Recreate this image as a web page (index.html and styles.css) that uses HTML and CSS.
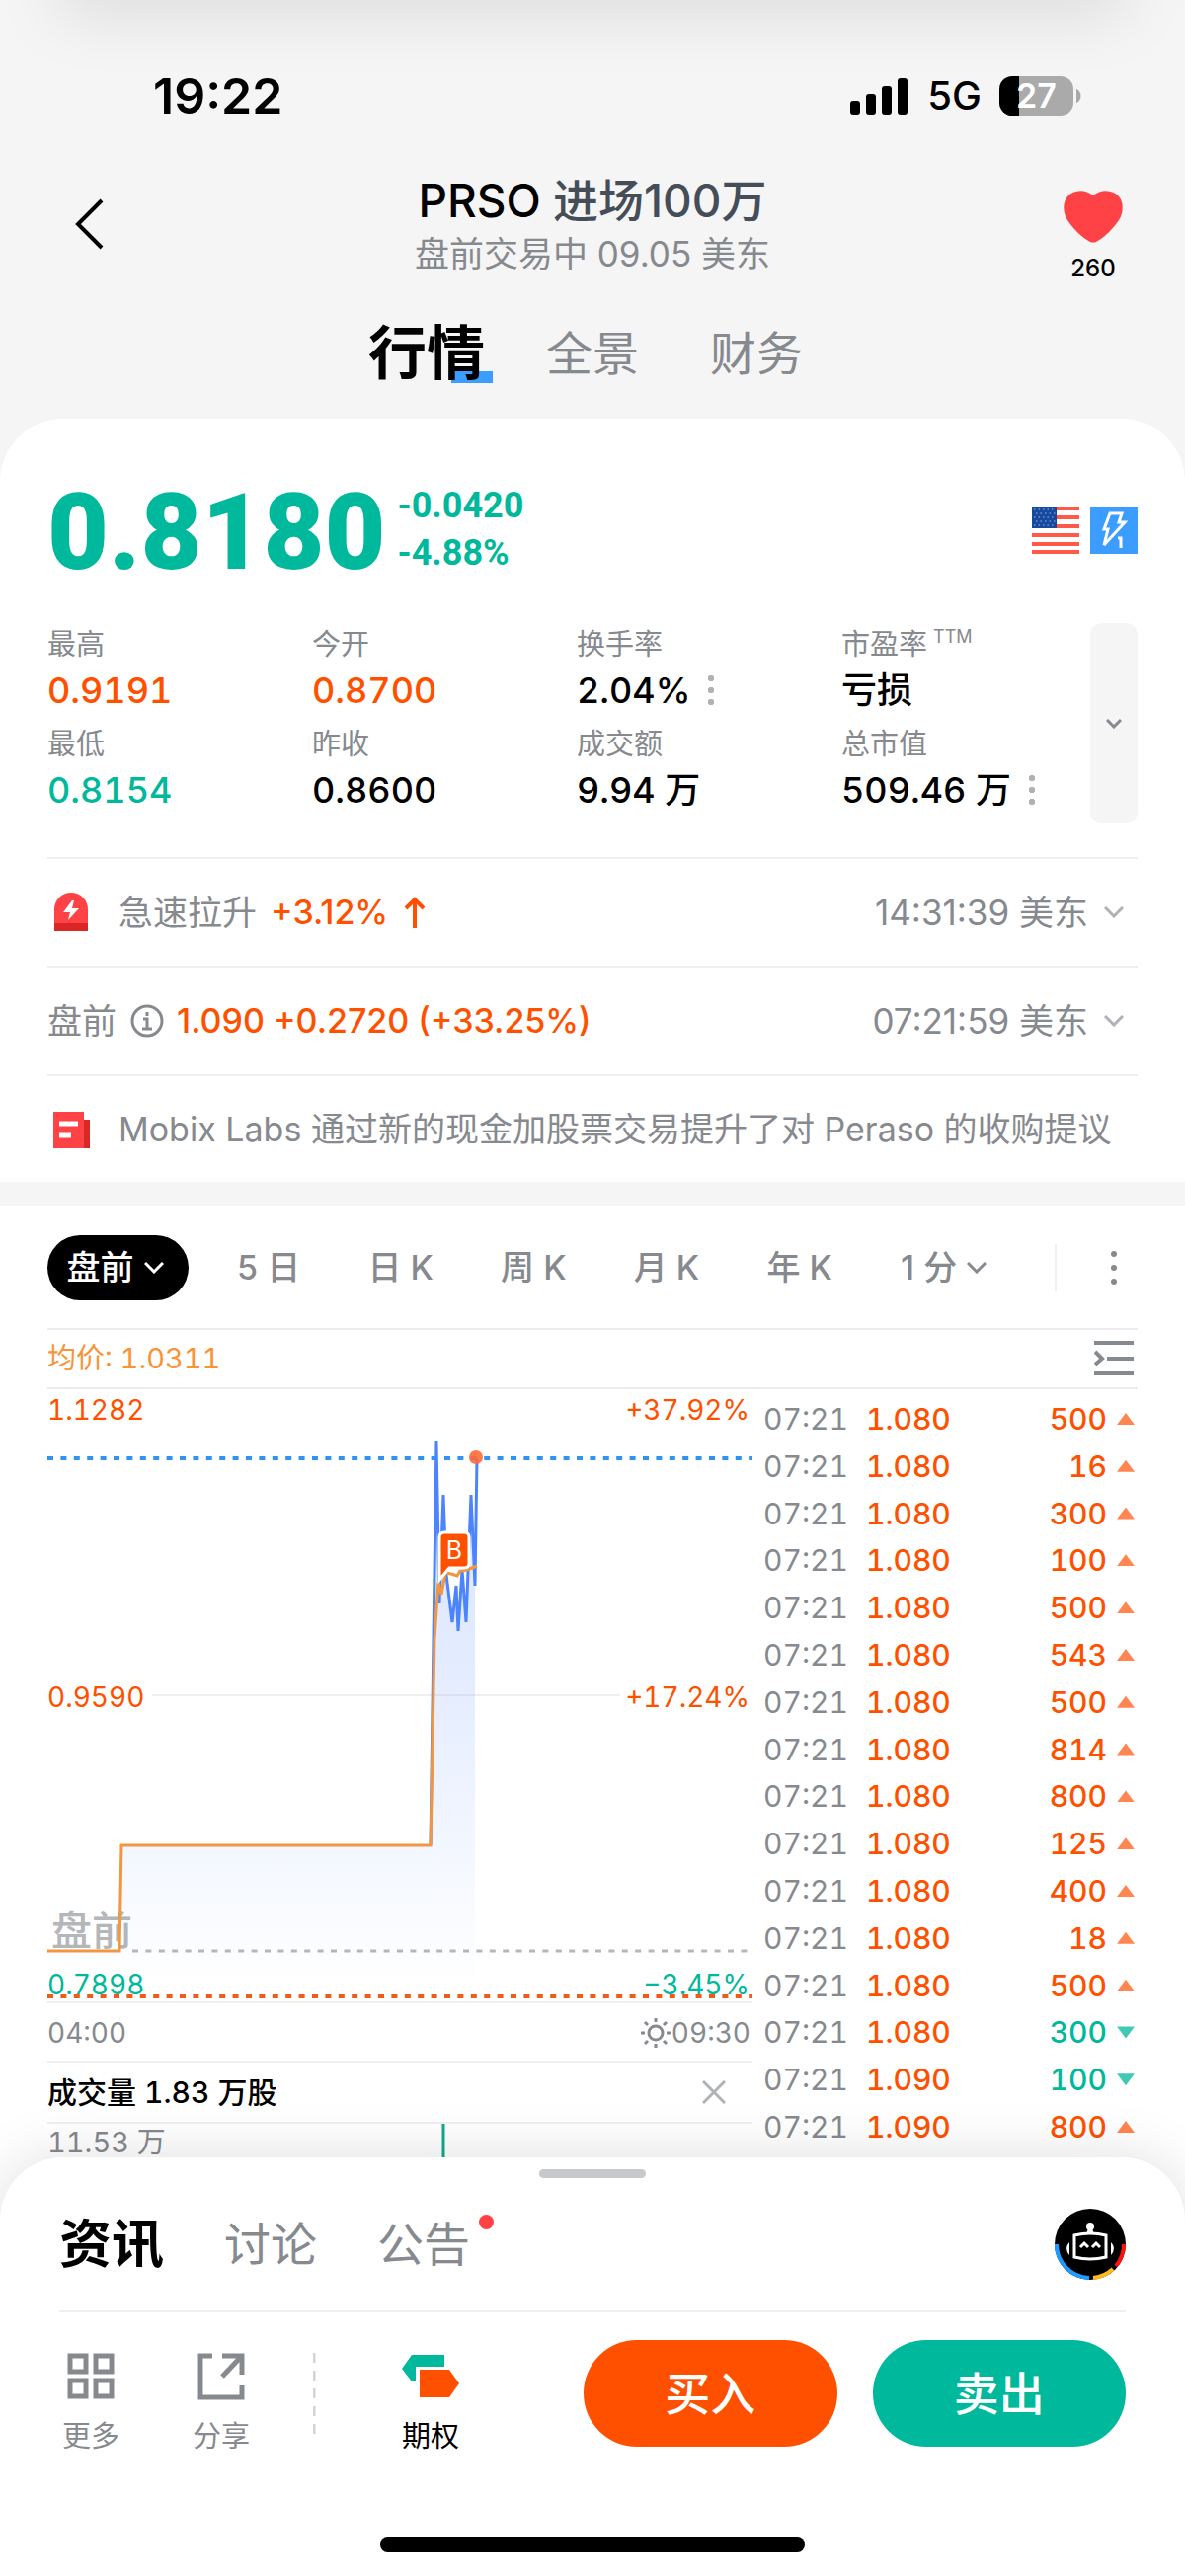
FILE: index.html
```html
<!DOCTYPE html>
<html lang="zh-CN">
<head>
<meta charset="utf-8">
<meta name="viewport" content="width=device-width, initial-scale=1">
<title>PRSO 行情</title>
<link rel="stylesheet" href="styles.css">
</head>
<body>
<div class="top-shade"></div>
<div class="status">
  <span class="clock">19:22</span>
  <div class="status-right">
    <svg class="signal" width="58" height="37" viewBox="0 0 58 37"><rect x="0" y="23" width="10" height="14" rx="3"/><rect x="16" y="16" width="10" height="21" rx="3"/><rect x="32" y="8" width="10" height="29" rx="3"/><rect x="48" y="0" width="10" height="37" rx="3"/></svg>
    <span class="network">5G</span>
    <span class="battery"><span class="battery-body">27</span><svg width="5" height="14" viewBox="0 0 5 14"><path d="M0 0C6 2 6 12 0 14Z" fill="#aaa"/></svg></span>
  </div>
</div>

<header class="header">
  <button class="back" aria-label="返回"><svg width="30" height="52" viewBox="0 0 30 52"><path d="M27 2 3 26l24 24" fill="none" stroke="#000" stroke-width="4"/></svg></button>
  <div class="heading">
    <h1>PRSO <span>进场100万</span></h1>
    <p>盘前交易中 09.05 美东</p>
  </div>
  <button class="like"><svg width="60" height="53" viewBox="0 0 60 53"><path d="M30 5C22-2 10-1 4 6-1 12-1 22 4 30c6 9 14 17 23 22q3 1 6 0c9-5 17-13 23-22 5-8 5-18 0-24C50-1 38-2 30 5Z" fill="#ff4245"/></svg><span>260</span></button>
</header>

<nav class="tabs">
  <a href="#" class="tab active">行情</a>
  <a href="#" class="tab second">全景</a>
  <a href="#" class="tab">财务</a>
</nav>

<main>
<section class="card">
  <div class="quote">
    <strong class="price">0.8180</strong>
    <div class="delta"><span>-0.0420</span><span>-4.88%</span></div>
    <div class="badges">
      <svg width="48" height="48" viewBox="0 0 48 48"><rect width="48" height="48" fill="#fff"/><path d="M0 2h48M0 11h48M0 20h48M0 29h48M0 38h48M0 46h48" stroke="#ff5a48" stroke-width="4"/><rect width="25" height="22" fill="#174a9e"/><path d="M2 3h22M4 7h20M2 11h22M4 15h20M2 19h22" stroke="#6d93cf" stroke-width="1.5" stroke-dasharray="1.5 3"/></svg>
      <svg width="48" height="48" viewBox="0 0 48 48"><rect width="48" height="48" fill="#3a9dff"/><path d="M20 7h12l-3 9h6L14 39l4-16h-4Z" fill="none" stroke="#fff" stroke-width="3"/><path d="M28 32h3v10" fill="none" stroke="#fff" stroke-width="3"/></svg>
    </div>
  </div>

  <div class="metrics">
    <dl class="metric-grid">
      <div><dt>最高</dt><dd class="up">0.9191</dd></div>
      <div><dt>今开</dt><dd class="up">0.8700</dd></div>
      <div><dt>换手率</dt><dd>2.04% <i class="dots"></i></dd></div>
      <div><dt>市盈率<sup>TTM</sup></dt><dd>亏损</dd></div>
      <div><dt>最低</dt><dd class="down">0.8154</dd></div>
      <div><dt>昨收</dt><dd>0.8600</dd></div>
      <div><dt>成交额</dt><dd>9.94 万</dd></div>
      <div><dt>总市值</dt><dd>509.46 万 <i class="dots"></i></dd></div>
    </dl>
    <button class="expand" aria-label="展开"><svg width="16" height="10" viewBox="0 0 16 10"><path d="m1 1 7 7 7-7" fill="none" stroke="#86898e" stroke-width="3"/></svg></button>
  </div>

  <div class="notices">
    <div class="notice">
      <svg class="lead-icon" width="48" height="48" viewBox="0 0 48 48"><path d="M7 35V21a17 17 0 0 1 34 0v14Z" fill="#ff4245"/><path d="M7 35h34v8H7Z" fill="#dc2626"/><path d="m25 12-9 12h7l-2 8 11-12h-7l2-8Z" fill="#fff"/></svg>
      <span>急速拉升</span><b class="up">+3.12%</b>
      <svg class="rise" width="22" height="32" viewBox="0 0 22 32"><path d="M11 32V2M2 12l9-9 9 9" fill="none" stroke="#ff5000" stroke-width="4"/></svg>
      <span class="when">14:31:39 美东</span>
      <svg class="chev" width="20" height="12" viewBox="0 0 20 12"><path d="m1 1 9 9 9-9" fill="none" stroke="#aeb1b5" stroke-width="3"/></svg>
    </div>
    <div class="notice">
      <span>盘前</span>
      <svg class="info" width="34" height="34" viewBox="0 0 34 34"><circle cx="17" cy="17" r="15" fill="none" stroke="#86898e" stroke-width="3"/><path d="M17 8v4M13 15h4v9M12 25h10" fill="none" stroke="#86898e" stroke-width="3"/></svg>
      <b class="up">1.090 +0.2720 (+33.25%)</b>
      <span class="when">07:21:59 美东</span>
      <svg class="chev" width="20" height="12" viewBox="0 0 20 12"><path d="m1 1 9 9 9-9" fill="none" stroke="#aeb1b5" stroke-width="3"/></svg>
    </div>
    <a href="#" class="notice">
      <svg class="lead-icon" width="48" height="48" viewBox="0 0 48 48"><path d="M36 14h7v29h-7Z" fill="#dc2626"/><path d="M6 6h31v37H6Z" fill="#ff4245"/><path d="M12 18h19M12 30h12" stroke="#fff" stroke-width="5"/></svg>
      <span class="news">Mobix Labs 通过新的现金加股票交易提升了对 Peraso 的收购提议</span>
    </a>
  </div>
</section>

<section class="market">
  <div class="toolbar">
    <button class="pill">盘前<svg width="20" height="12" viewBox="0 0 20 12"><path d="m1 1 9 9 9-9" fill="none" stroke="#fff" stroke-width="3"/></svg></button>
    <div class="periods">
      <button>5 日</button><button>日 K</button><button>周 K</button><button>月 K</button><button>年 K</button>
    </div>
    <button class="minute">1 分<svg width="20" height="12" viewBox="0 0 20 12"><path d="m1 1 9 9 9-9" fill="none" stroke="#86898e" stroke-width="3"/></svg></button>
    <span class="sep"></span>
    <button class="more" aria-label="更多周期"><svg width="6" height="34" viewBox="0 0 6 34"><g fill="#86898e"><circle cx="3" cy="3" r="3"/><circle cx="3" cy="17" r="3"/><circle cx="3" cy="31" r="3"/></g></svg></button>
  </div>
  <div class="average">
    <span>均价: 1.0311</span>
    <button class="collapse" aria-label="收起"><svg width="40" height="36" viewBox="0 0 40 36"><path d="M0 2h40M13 18h27M0 33h40M1 11l7 7-7 6" fill="none" stroke="#86898e" stroke-width="4"/></svg></button>
  </div>

  <div class="board">
    <div class="chart">
      <div class="plot">
        <span class="watermark">盘前</span>
        <svg class="lines" viewBox="0 0 714 620">
          <defs><linearGradient id="area" x1="0" y1="0" x2="0" y2="1"><stop offset="0" stop-color="#4c84ff" stop-opacity=".22"/><stop offset=".45" stop-color="#4c84ff" stop-opacity=".15"/><stop offset="1" stop-color="#4c84ff" stop-opacity="0"/></linearGradient></defs>
          <path d="M106 310H580" stroke="#efefef" stroke-width="2"/>
          <path d="M0 600V569H73L75 462H388L394 52 397 217 401 107 404 188 410 236 414 199 416 245 420 183 424 236 429 107 433 199V600Z" fill="url(#area)"/>
          <path d="M86 569H714" stroke="#b4b7ba" stroke-width="3" stroke-dasharray="6 7.4"/>
          <path d="M0 615H714" stroke="#f05a1a" stroke-width="4" stroke-dasharray="6 7.4"/>
          <path d="M0 70H714" stroke="#2f93f5" stroke-width="4" stroke-dasharray="6 7.4"/>
          <path d="M388 462 391 250 394 52 397 217 401 107 404 188 410 236 414 199 416 245 420 183 424 236 429 107 433 199 435 70" fill="none" stroke="#4c84ff" stroke-width="3"/>
          <path d="M0 569H73L75 462H388L392 253 396 195 399 208 403 186 409 187 415 189 418 184 425 183 435 179" fill="none" stroke="#f2963f" stroke-width="3"/>
          <circle cx="434" cy="69" r="7" fill="#ff6a38" fill-opacity=".9"/>
          <path d="M397 193V150q0-5 5-5h20q5 0 5 5v26q0 5-5 5h-15Z" fill="#ff5000" stroke="#fff" stroke-width="3"/>
          <text x="412" y="172" class="mark">B</text>
        </svg>
        <div class="scale">
          <div class="up"><span>1.1282</span><span>+37.92%</span></div>
          <div class="up"><span>0.9590</span><span>+17.24%</span></div>
          <div class="down"><span>0.7898</span><span>−3.45%</span></div>
        </div>
      </div>
      <div class="axis">
        <span>04:00</span>
        <span class="open"><svg width="32" height="32" viewBox="0 0 32 32"><g fill="none" stroke="#86898e" stroke-width="3"><circle cx="16" cy="16" r="7"/><path d="M16 1v4M16 27v4M1 16h4M27 16h4M5 5l3 3M24 24l3 3M5 27l3-3M24 8l3-3"/></g></svg>09:30</span>
      </div>
      <div class="volume-head">
        <span>成交量 1.83 万股</span>
        <button class="close" aria-label="关闭"><svg width="24" height="24" viewBox="0 0 24 24"><path d="m1 1 22 22M23 1 1 23" fill="none" stroke="#b0b2b5" stroke-width="3"/></svg></button>
      </div>
      <div class="volume">
        <span>11.53 万</span>
        <svg viewBox="0 0 714 34" preserveAspectRatio="none"><path d="M401 0V34" stroke="#12a88c" stroke-width="3"/></svg>
      </div>
    </div>

    <table class="trades">
      <tbody>
        <tr><td>07:21</td><td>1.080</td><td class="up">500</td><td><i class="tri"></i></td></tr>
        <tr><td>07:21</td><td>1.080</td><td class="up">16</td><td><i class="tri"></i></td></tr>
        <tr><td>07:21</td><td>1.080</td><td class="up">300</td><td><i class="tri"></i></td></tr>
        <tr><td>07:21</td><td>1.080</td><td class="up">100</td><td><i class="tri"></i></td></tr>
        <tr><td>07:21</td><td>1.080</td><td class="up">500</td><td><i class="tri"></i></td></tr>
        <tr><td>07:21</td><td>1.080</td><td class="up">543</td><td><i class="tri"></i></td></tr>
        <tr><td>07:21</td><td>1.080</td><td class="up">500</td><td><i class="tri"></i></td></tr>
        <tr><td>07:21</td><td>1.080</td><td class="up">814</td><td><i class="tri"></i></td></tr>
        <tr><td>07:21</td><td>1.080</td><td class="up">800</td><td><i class="tri"></i></td></tr>
        <tr><td>07:21</td><td>1.080</td><td class="up">125</td><td><i class="tri"></i></td></tr>
        <tr><td>07:21</td><td>1.080</td><td class="up">400</td><td><i class="tri"></i></td></tr>
        <tr><td>07:21</td><td>1.080</td><td class="up">18</td><td><i class="tri"></i></td></tr>
        <tr><td>07:21</td><td>1.080</td><td class="up">500</td><td><i class="tri"></i></td></tr>
        <tr><td>07:21</td><td>1.080</td><td class="down">300</td><td><i class="tri fall"></i></td></tr>
        <tr><td>07:21</td><td>1.090</td><td class="down">100</td><td><i class="tri fall"></i></td></tr>
        <tr><td>07:21</td><td>1.090</td><td class="up">800</td><td><i class="tri"></i></td></tr>
      </tbody>
    </table>
  </div>
</section>
</main>

<footer class="sheet">
  <div class="handle"></div>
  <nav class="sheet-tabs">
    <a href="#" class="active">资讯</a>
    <a href="#">讨论</a>
    <a href="#" class="unread">公告</a>
    <button class="robot" aria-label="智能助手"><svg width="72" height="72" viewBox="0 0 72 72"><circle cx="36" cy="36" r="36"/><g fill="none" stroke-width="4"><path d="M2 36A34 34 0 0 0 35 70" stroke="#1e9bff"/><path d="M39 70A34 34 0 0 0 59 61" stroke="#ffb81c"/><path d="M62 58A34 34 0 0 0 70 36" stroke="#ff0f0f"/></g><circle cx="36" cy="18" r="4" fill="#fff"/><path d="M34 20h4l2 6h-8ZM15 34q-6 6 0 13ZM57 34q6 6 0 13Z" fill="#fff"/><path d="M20 27q16-4 32 0v22q-16 4-32 0Z" fill="none" stroke="#fff" stroke-width="3"/><path d="m26 39 4-4 4 4M38 39l4-4 4 4" fill="none" stroke="#fff" stroke-width="3"/></svg></button>
  </nav>
  <div class="actions">
    <div class="tools">
      <button><svg width="48" height="48" viewBox="0 0 48 48"><path d="M3 3h16v16H3ZM29 3h16v16H29ZM3 28h16v16H3ZM29 28h16v16H29Z" fill="none" stroke="#86898e" stroke-width="5"/></svg><span>更多</span></button>
      <button><svg width="48" height="48" viewBox="0 0 48 48"><path d="M15 3H3v42h42V33M25 3h20v19M44 4 25 24" fill="none" stroke="#86898e" stroke-width="5"/></svg><span>分享</span></button>
      <svg class="split" width="3" height="84" viewBox="0 0 3 84"><path d="M1 0v84" stroke="#d4d4d4" stroke-width="3" stroke-dasharray="10 8"/></svg>
      <button class="options"><svg width="58" height="48" viewBox="0 0 58 48"><path d="M10 2h33v12H14v15h-4L0 16Z" fill="#00b89c"/><path d="M18 17h30l10 14-10 14H18Z" fill="#ff5000"/></svg><span>期权</span></button>
    </div>
    <div class="orders">
      <button class="buy">买入</button>
      <button class="sell">卖出</button>
    </div>
  </div>
  <div class="home-bar"></div>
</footer>
</body>
</html>
```

FILE: styles.css
```css
:root {
  --up: #ff5000;
  --down: #00b89c;
  --grey: #86898e;
  --line: #efefef;
}
* { box-sizing: border-box; }
body {
  margin: 0;
  background: #f5f5f5;
  color: #000;
  font-family: Inter, "Noto Sans CJK SC", sans-serif;
  overflow-x: hidden;
}
button { margin: 0; padding: 0; border: 0; background: none; color: inherit; font: inherit; }
a { color: inherit; text-decoration: none; }
svg { display: block; flex: none; }
h1, p, dl, dd { margin: 0; }
.up { color: var(--up); }
.down { color: var(--down); }

.top-shade {
  position: absolute;
  top: -40px;
  left: 70px;
  right: 70px;
  height: 40px;
  box-shadow: 0 0 70px 10px rgba(0, 0, 0, .12);
}

.status { display: flex; justify-content: space-between; align-items: center; padding: 72px 105px 0 155px; line-height: 50px; }
.clock { font-size: 50px; font-weight: 600; }
.status-right { display: flex; align-items: center; }
.network { margin-left: 20px; font-size: 40px; font-weight: 500; }
.battery { display: flex; align-items: center; gap: 3px; margin-left: 18px; }
.battery-body {
  width: 75px;
  height: 40px;
  border-radius: 13px;
  background: linear-gradient(90deg, #000 20px, #aaa 20px);
  color: #fff;
  font-size: 34px;
  font-weight: 600;
  line-height: 40px;
  text-align: center;
}

.header { display: grid; grid-template-columns: 1fr auto 1fr; align-items: start; margin-top: 51px; }
.back { justify-self: start; padding: 28px 0 0 76px; }
.heading { text-align: center; }
.heading h1 { font-size: 46px; font-weight: 500; line-height: 60px; }
.heading h1 span { color: #454e58; }
.heading p { font-size: 35px; line-height: 48px; color: var(--grey); }
.like { justify-self: end; display: flex; flex-direction: column; align-items: center; gap: 11px; padding: 20px 63px 0 0; font-size: 24px; font-weight: 500; line-height: 30px; }

.tabs { display: flex; justify-content: center; align-items: center; margin: 31px 0 26px; padding-right: 14px; line-height: 80px; font-size: 47px; color: var(--grey); }
.tab { margin-left: 72px; }
.tab.active {
  margin-left: 0;
  margin-right: -8px;
  padding-right: 8px;
  color: #000;
  font-size: 59px;
  font-weight: 700;
  background: linear-gradient(#3a9dff, #3a9dff) right 58px / 42px 12px no-repeat;
}
.tab.active + .tab { margin-left: 62px; }

main { margin-bottom: -64px; padding-bottom: 64px; background: #fff linear-gradient(#f5f5f5, #f5f5f5) 0 0 / 100% 80px no-repeat; }
.card { background: #fff; border-radius: 64px 64px 0 0; padding: 61px 48px 0; }
.quote { display: flex; align-items: flex-start; font-family: Roboto, "Noto Sans CJK SC", sans-serif; font-weight: 700; color: var(--down); }
.price { font-size: 107px; line-height: 110px; }
.delta { display: flex; flex-direction: column; margin: 3px 0 0 12px; font-size: 36px; line-height: 48px; }
.badges { display: flex; gap: 11px; margin: 28px 0 0 auto; }

.metrics { display: flex; margin-top: 36px; }
.metric-grid { flex: 1; display: grid; grid-template-columns: 268fr 268fr 268fr 252fr; row-gap: 8px; padding: 1px 0 8px; }
dt { font-size: 29px; line-height: 42px; color: var(--grey); }
dt sup { font-size: 18px; line-height: 18px; vertical-align: 12px; margin-left: 6px; }
dd { font-size: 36px; font-weight: 500; line-height: 51px; font-variant-numeric: tabular-nums; white-space: nowrap; }
.dots { display: inline-block; width: 6px; height: 30px; margin-left: 8px; vertical-align: -2px; background: radial-gradient(circle, #b0b2b5 3px, transparent 3px) 0 -3px / 6px 12px; }
.expand { width: 48px; border-radius: 12px; background: #f5f5f5; display: flex; align-items: center; justify-content: center; }

.notices { margin-top: 34px; }
.notice { display: flex; align-items: center; height: 110px; border-top: 2px solid var(--line); font-size: 35px; line-height: 48px; color: var(--grey); white-space: nowrap; }
.notice:last-child { height: 109px; }
.notice b { font-size: 34px; font-weight: 500; }
.lead-icon { margin-right: 24px; }
.notice span + b { margin-left: 14px; }
.rise { margin-left: 16px; }
.when { margin-left: auto; }
.chev { margin: 0 14px 0 16px; }
.info { margin: 0 13px 0 14px; }
.news { font-size: 34px; }

.market { background: #fff; border-top: 24px solid #f5f5f5; padding: 0 48px; }
.toolbar { display: flex; align-items: center; padding: 30px 0 28px; font-size: 34px; font-weight: 500; line-height: 66px; color: var(--grey); white-space: nowrap; }
.pill { display: flex; align-items: center; justify-content: center; gap: 10px; width: 143px; padding-right: 6px; border-radius: 33px; background: #000; color: #fff; }
.periods { flex: 1; display: flex; justify-content: space-around; padding-left: 15px; }
.minute { display: flex; align-items: center; gap: 10px; width: 86px; margin-left: 35px; }
.sep { width: 2px; height: 48px; margin: 0 34px 0 70px; background: var(--line); }
.more { display: flex; justify-content: center; width: 48px; }
.average { display: flex; justify-content: space-between; align-items: center; height: 60px; border-top: 2px solid #ececee; padding-right: 4px; color: #f7943a; font-size: 29px; line-height: 36px; font-variant-numeric: tabular-nums; }

.board { display: grid; grid-template-columns: 714fr 390fr; border-top: 2px solid #ececee; color: var(--grey); font-size: 28px; line-height: 36px; font-variant-numeric: tabular-nums; }
.plot { position: relative; }
.lines { position: relative; width: 100%; height: auto; }
.watermark { position: absolute; left: 4px; bottom: 49px; font-size: 41px; font-weight: 500; line-height: 46px; color: #b4b7ba; }
.mark { font-family: Inter, sans-serif; font-size: 25px; fill: #fff; text-anchor: middle; }
.scale { position: absolute; inset: 0; display: flex; flex-direction: column; justify-content: space-between; padding: 6px 3px 2px 0; line-height: 30px; }
.scale div { display: flex; justify-content: space-between; }
.axis { display: flex; justify-content: space-between; align-items: center; height: 60px; padding: 2px 2px 0 0; border-top: 2px solid var(--line); }
.open { display: flex; align-items: center; }
.volume-head { display: flex; justify-content: space-between; align-items: center; height: 62px; padding-right: 27px; border-top: 2px solid var(--line); color: #000; font-size: 30px; font-weight: 500; }
.volume { display: grid; height: 36px; border-top: 2px solid var(--line); font-size: 29px; line-height: 38px; }
.volume > * { grid-area: 1 / 1; }
.volume svg { width: 100%; height: 34px; }

.trades { width: 100%; height: 765px; margin: 6px 0 0; border-collapse: collapse; font-size: 30px; align-self: start; }
.trades td { padding: 0; }
.trades td:nth-child(1) { width: 115px; padding-left: 11px; }
.trades td:nth-child(2) { width: 90px; color: var(--up); font-weight: 500; }
.trades td:nth-child(3) { text-align: right; font-weight: 500; }
.trades td:nth-child(4) { width: 31px; }
.tri { display: block; width: 18px; height: 12px; margin-left: 10px; background: #ff8551; clip-path: polygon(50% 0, 100% 100%, 0 100%); }
.tri.fall { background: #3fc9b3; clip-path: polygon(0 0, 100% 0, 50% 100%); }

.sheet { position: relative; background: #fff; border-radius: 64px 64px 0 0; padding: 12px 60px 24px; box-shadow: 0 0 60px rgba(0, 0, 0, .13); }
.handle { width: 108px; height: 9px; margin: 0 auto; border-radius: 5px; background: #c6c8cc; }
.sheet-tabs { display: flex; align-items: center; gap: 61px; padding: 31px 0; border-bottom: 2px solid var(--line); font-size: 47px; line-height: 72px; color: var(--grey); }
.sheet-tabs .active { font-size: 53px; font-weight: 700; color: #000; }
.unread { position: relative; }
.unread::after { content: ""; position: absolute; top: 6px; right: -24px; width: 15px; height: 15px; border-radius: 50%; background: #ff4245; }
.robot { margin-left: auto; }
.actions { display: grid; grid-template-columns: 531fr 549fr; padding-top: 28px; }
.tools { display: flex; align-items: flex-start; padding: 13px 0 0 3px; font-size: 29px; line-height: 36px; color: var(--grey); }
.tools button { display: flex; flex-direction: column; align-items: center; gap: 19px; }
.tools button + button { margin-left: 74px; }
.split { margin-left: 64px; }
.tools .options { margin-left: 87px; color: #000; }
.orders { display: grid; grid-template-columns: 1fr 1fr; gap: 36px; align-items: start; }
.orders button { height: 108px; border-radius: 54px; color: #fff; font-size: 46px; font-weight: 500; line-height: 54px; }
.buy { background: var(--up); }
.sell { background: var(--down); }
.home-bar { width: 36%; min-width: 430px; height: 15px; margin: 84px auto 0; border-radius: 8px; background: #000; }
```
